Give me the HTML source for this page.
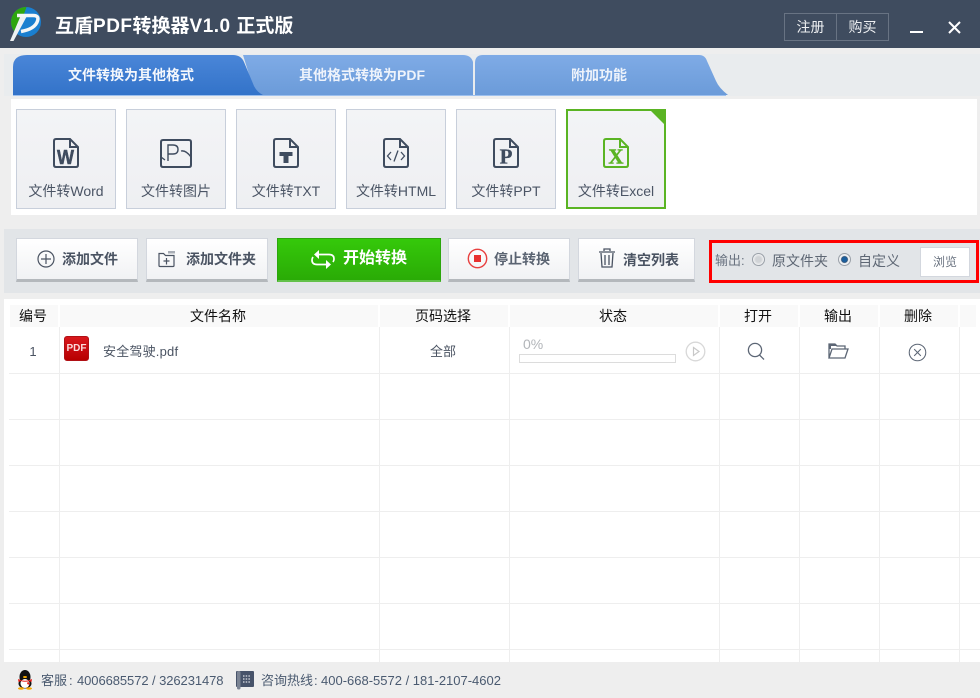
<!DOCTYPE html>
<html lang="zh"><head><meta charset="utf-8"><title>互盾PDF转换器</title>
<style>
*{box-sizing:border-box}
html,body{margin:0;padding:0}
body{width:980px;height:698px;position:relative;overflow:hidden;background:#eee;font-family:"Liberation Sans","Noto Sans CJK SC",sans-serif;color:#3f4c5f}
.a{position:absolute}
.t{position:absolute;white-space:nowrap;line-height:1}
.c{text-align:center}
.card{position:absolute;top:109px;width:100px;height:100px;border:1px solid #c8cfdb;background:linear-gradient(#f3f4f6,#eeeff2)}
.card .l{position:absolute;left:0;right:0;top:73px;text-align:center;font-size:14px;line-height:16px;color:#4b5565;white-space:nowrap}
.card svg{position:absolute;left:36px;top:28px}
.btn{position:absolute;top:238px;height:44px;border:1px solid #d3d7de;border-bottom:3px solid #b4b8bc;background:linear-gradient(#fff,#f1f2f4)}
.btn span{position:absolute;white-space:nowrap;font-size:14px;font-weight:bold;line-height:16px;top:12px;color:#4a5362}
.h{position:absolute;top:305px;height:22px;background:#f9f9f9;font-size:14px;line-height:22px;text-align:center;color:#111}
.h b{font-weight:normal;position:relative;left:-1px}
.v{position:absolute;top:327px;height:335px;width:1px;background:#eeeeee}
.r{position:absolute;left:9px;width:971px;height:1px;background:#eeeeee}
</style></head><body>
<div class="a" style="left:0;top:0;width:980px;height:48px;background:#3f4c5f"></div>
<svg class="a" style="left:0;top:0" width="48" height="48" viewBox="0 0 48 48">
<defs><clipPath id="cc"><circle cx="26" cy="22" r="15"/></clipPath></defs>
<circle cx="26" cy="22" r="15" fill="#1a7fd0"/>
<path d="M5 0H29L24 14L14 40H5Z" fill="#2ea50e" clip-path="url(#cc)"/>
<path d="M10 41L13.5 41L27.5 15L21 15Z" fill="#eef1f3"/>
<path d="M17 15.5H32Q39.500 15 37.500 21Q35 29 21 31.500" fill="none" stroke="#f4f6f7" stroke-width="3.5"/>
</svg>
<div class="t" style="left:55px;top:16px;font-size:19px;font-weight:bold;color:#fff;line-height:21px">互盾<span style="letter-spacing:.5px">PDF</span>转换器<span style="letter-spacing:.5px">V1.0 </span>正式版</div>
<div class="a" style="left:784px;top:13px;width:105px;height:28px;border:1px solid #687383"></div>
<div class="a" style="left:836px;top:13px;width:1px;height:28px;background:#687383"></div>
<div class="t c" style="left:785px;top:20px;width:51px;font-size:14px;color:#eef0f2">注册</div>
<div class="t c" style="left:837px;top:20px;width:51px;font-size:14px;color:#eef0f2">购买</div>
<div class="a" style="left:910px;top:31px;width:13px;height:2px;background:#fff"></div>
<svg class="a" style="left:948px;top:21px" width="13" height="13" viewBox="0 0 13 13"><path d="M1 1L12 12M12 1L1 12" stroke="#fff" stroke-width="2"/></svg>

<div class="a" style="left:0;top:48px;width:980px;height:6px;background:#eeeeee"></div>
<div class="a" style="left:4px;top:54px;width:976px;height:45px;background:#e9ecee"></div>
<svg class="a" style="left:0;top:54px" width="740" height="42" viewBox="0 0 740 42">
<defs>
<linearGradient id="g1" x1="0" y1="0" x2="0" y2="1"><stop offset="0" stop-color="#4a86d8"/><stop offset="1" stop-color="#3373c9"/></linearGradient>
<linearGradient id="g2" x1="0" y1="0" x2="0" y2="1"><stop offset="0" stop-color="#7fabe6"/><stop offset="1" stop-color="#6b9bd9"/></linearGradient>
</defs>
<path d="M475 41V9Q475 1 483 1H699Q705 1 707 7L716 27Q719 34 728 41Z" fill="url(#g2)"/>
<path d="M243 1H463Q471 1 473 8V20L473 41H260Q254 38 252 30Z" fill="url(#g2)"/>
<path d="M13 41V13Q13 1 27 1H233Q241 1 244 8L254 32Q257 38 263 41Z" fill="url(#g1)"/>
</svg>
<div class="a" style="left:13px;top:95px;width:713px;height:1px;background:#9dc0ee"></div>
<div class="t c" style="left:13px;top:68px;width:236px;font-size:14px;font-weight:bold;color:#f4f7fc">文件转换为其他格式</div>
<div class="t c" style="left:250px;top:68px;width:224px;font-size:14px;font-weight:bold;color:#eef3fb">其他格式转换为PDF</div>
<div class="t c" style="left:483px;top:68px;width:232px;font-size:14px;font-weight:bold;color:#eef3fb">附加功能</div>

<div class="a" style="left:4px;top:96px;width:976px;height:123px;background:#eeeeee"></div>
<div class="a" style="left:11px;top:99px;width:966px;height:116px;background:#fff"></div>

<div class="card" style="left:16px"><svg width="26" height="30" viewBox="0 0 26 30"><path d="M3 1H17L25 9V27Q25 29 23 29H3Q1 29 1 27V3Q1 1 3 1ZM17 1V9H25" fill="none" stroke="#3f4c5f" stroke-width="2"/><text x="4" y="26" textLength="17" lengthAdjust="spacingAndGlyphs" font-family="Liberation Sans" font-weight="bold" font-size="20" fill="#3f4c5f" stroke="#3f4c5f" stroke-width=".5">W</text></svg><div class="l">文件转Word</div></div>
<div class="card" style="left:126px"><svg style="left:33px;top:29px" width="32" height="29" viewBox="0 0 32 29"><path d="M3 1H29Q31 1 31 3V26Q31 28 29 28H3Q1 28 1 26V3Q1 1 3 1Z" fill="none" stroke="#3f4c5f" stroke-width="2"/><path d="M8 22V6H13Q18 6 18 10.500Q18 15 13 15H8M21 12Q26 11 31 18M1 18L5 21" fill="none" stroke="#3f4c5f" stroke-width="1.4"/></svg><div class="l">文件转图片</div></div>
<div class="card" style="left:236px"><svg width="26" height="30" viewBox="0 0 26 30"><path d="M3 1H17L25 9V27Q25 29 23 29H3Q1 29 1 27V3Q1 1 3 1ZM17 1V9H25" fill="none" stroke="#3f4c5f" stroke-width="2"/><path d="M6.500 14H19.500V18H15.500V25H10.500V18H6.500Z" fill="#3f4c5f"/></svg><div class="l">文件转TXT</div></div>
<div class="card" style="left:346px"><svg width="26" height="30" viewBox="0 0 26 30"><path d="M3 1H17L25 9V27Q25 29 23 29H3Q1 29 1 27V3Q1 1 3 1ZM17 1V9H25" fill="none" stroke="#3f4c5f" stroke-width="2"/><path d="M8 14L4.500 18L8 22M18 14L21.500 18L18 22M15 12.500L11 23.500" fill="none" stroke="#3f4c5f" stroke-width="1.3"/></svg><div class="l">文件转HTML</div></div>
<div class="card" style="left:456px"><svg width="26" height="30" viewBox="0 0 26 30"><path d="M3 1H17L25 9V27Q25 29 23 29H3Q1 29 1 27V3Q1 1 3 1ZM17 1V9H25" fill="none" stroke="#3f4c5f" stroke-width="2"/><text x="13" y="25.500" text-anchor="middle" font-family="Liberation Serif" font-weight="bold" font-size="21" fill="#3f4c5f" stroke="#3f4c5f" stroke-width=".3">P</text></svg><div class="l">文件转PPT</div></div>
<div class="card" style="left:566px;border:2px solid #5ab423"><svg style="left:35px;top:27px" width="26" height="30" viewBox="0 0 26 30"><path d="M3 1H17L25 9V27Q25 29 23 29H3Q1 29 1 27V3Q1 1 3 1ZM17 1V9H25" fill="none" stroke="#5ab423" stroke-width="2"/><text x="13" y="25.500" text-anchor="middle" font-family="Liberation Serif" font-weight="bold" font-size="21" fill="#5ab423" stroke="#5ab423" stroke-width=".5">X</text></svg><div class="l" style="top:72px">文件转Excel</div><div class="a" style="right:-2px;top:-2px;width:0;height:0;border-top:17px solid #5ab423;border-left:17px solid transparent"></div></div>

<div class="a" style="left:4px;top:229px;width:976px;height:64px;background:#e2e5e8"></div>
<div class="btn" style="left:16px;width:122px"><svg class="a" style="left:20px;top:11px" width="18" height="18" viewBox="0 0 18 18"><circle cx="9" cy="9" r="8" fill="none" stroke="#4a5362" stroke-width="1.2"/><path d="M9 4V14M4 9H14" stroke="#4a5362" stroke-width="1.2"/></svg><span style="left:45px">添加文件</span></div>
<div class="btn" style="left:146px;width:122px"><svg class="a" style="left:11px;top:12px" width="18" height="17" viewBox="0 0 18 17"><path d="M1 2.500V14.500Q1 15.500 2 15.500H15Q16 15.500 16 14.500V4.500H7.500L5.500 2.500Z" fill="none" stroke="#4a5362" stroke-width="1.2"/><path d="M8.500 7V13.500M5.500 10H11.500" stroke="#4a5362" stroke-width="1.2"/><path d="M10 0H17V2.500H10Z" fill="#a8adb5"/></svg><span style="left:39px">添加文件夹</span></div>
<div class="a" style="left:277px;top:238px;width:164px;height:44px;border:1px solid #2ba60c;border-bottom:2px solid #63c14a;background:linear-gradient(#35c90a,#2aab06)"></div>
<svg class="a" style="left:311px;top:250px" width="24" height="19" viewBox="0 0 24 19"><path d="M7 4.500H18Q23 4.500 23 9Q23 10.500 22 12M16 14.500H6Q1 14.500 1 10Q1 8.500 2 7" fill="none" stroke="#fff" stroke-width="1.7"/><path d="M8 0V9L3 4.500ZM15 10V19L20 14.500Z" fill="#fff"/></svg>
<div class="t" style="left:343px;top:250px;font-size:16px;font-weight:bold;color:#fff;line-height:18px">开始转换</div>
<div class="btn" style="left:448px;width:122px"><svg class="a" style="left:18px;top:9px" width="21" height="21" viewBox="0 0 21 21"><circle cx="10.500" cy="10.500" r="9.200" fill="none" stroke="#e8403f" stroke-width="1.400"/><rect x="7" y="7" width="7" height="7" fill="#e8302f"/></svg><span style="left:45px;color:#5b6472">停止转换</span></div>
<div class="btn" style="left:578px;width:117px"><svg class="a" style="left:20px;top:9px" width="16" height="20" viewBox="0 0 16 20"><path d="M0 4H16M5 3V1H11V3M2 5L3 19H13L14 5M6 7V17M10 7V17" fill="none" stroke="#4a5362" stroke-width="1.300"/></svg><span style="left:44px;top:13px">清空列表</span></div>

<div class="a" style="left:709px;top:240px;width:270px;height:43px;border:3px solid #f00"></div>
<div class="t" style="left:715px;top:254px;font-size:13px;color:#6a7380">输出:</div>
<div class="a" style="left:752px;top:253px;width:13px;height:13px;border-radius:50%;border:1px solid #9aa0a8;background:radial-gradient(#d0d3d6 35%,#f2f3f4 70%)"></div>
<div class="t" style="left:772px;top:254px;font-size:14px;color:#5e6774">原文件夹</div>
<div class="a" style="left:838px;top:253px;width:13px;height:13px;border-radius:50%;border:1px solid #9aa0a8;background:radial-gradient(#1a5f9e 30%,#2c4c70 38%,#eef0f2 50%)"></div>
<div class="t" style="left:858px;top:254px;font-size:14px;color:#5e6774">自定义</div>
<div class="a t c" style="left:920px;top:247px;width:50px;height:30px;border:1px solid #d3d7de;background:#fff;font-size:12px;line-height:28px;color:#6a7380">浏览</div>

<div class="a" style="left:4px;top:299px;width:976px;height:363px;background:#fff"></div>
<div class="h" style="left:10px;width:48px"><b>编号</b></div>
<div class="h" style="left:60px;width:318px"><b>文件名称</b></div>
<div class="h" style="left:380px;width:128px"><b>页码选择</b></div>
<div class="h" style="left:510px;width:208px"><b>状态</b></div>
<div class="h" style="left:720px;width:78px"><b>打开</b></div>
<div class="h" style="left:800px;width:78px"><b>输出</b></div>
<div class="h" style="left:880px;width:78px"><b>删除</b></div>
<div class="h" style="left:960px;width:16px"></div>
<div class="v" style="left:59px"></div><div class="v" style="left:379px"></div><div class="v" style="left:509px"></div><div class="v" style="left:719px"></div><div class="v" style="left:799px"></div><div class="v" style="left:879px"></div><div class="v" style="left:959px"></div>
<div class="r" style="top:373px"></div><div class="r" style="top:419px"></div><div class="r" style="top:465px"></div><div class="r" style="top:511px"></div><div class="r" style="top:557px"></div><div class="r" style="top:603px"></div><div class="r" style="top:649px"></div>

<div class="t c" style="left:9px;top:345px;width:48px;font-size:13px;color:#4a5362">1</div>
<div class="a" style="left:64px;top:336px;width:25px;height:25px;border-radius:3px;border:1px solid #b01015;background:linear-gradient(#d9181c,#c40a0e 60%,#b80000)"></div>
<div class="t c" style="left:64px;top:344px;width:25px;font-size:10px;font-weight:bold;color:#fbdcdc;font-family:'Liberation Sans',sans-serif">PDF</div>
<div class="t" style="left:103px;top:345px;font-size:13px;color:#4a5362;letter-spacing:.2px">安全驾驶.pdf</div>
<div class="t c" style="left:379px;top:345px;width:128px;font-size:13px;color:#4a5362">全部</div>
<div class="t" style="left:523px;top:337px;font-size:14px;color:#b2b5b9">0%</div>
<div class="a" style="left:519px;top:354px;width:157px;height:9px;border:1px solid #dcdcdc;background:#fff"></div>
<svg class="a" style="left:685px;top:341px" width="21" height="21" viewBox="0 0 21 21"><circle cx="10.500" cy="10.500" r="9.300" fill="none" stroke="#d8d8d8" stroke-width="1.300"/><path d="M8.500 6.500L14 10.500L8.500 14.500Z" fill="none" stroke="#c8c8c8" stroke-width="1.200"/></svg>
<svg class="a" style="left:747px;top:342px" width="18" height="18" viewBox="0 0 18 18"><circle cx="8" cy="8" r="6.600" fill="none" stroke="#5c6675" stroke-width="1.300"/><path d="M12.500 13L17 17.500" stroke="#5c6675" stroke-width="1.300"/></svg>
<svg class="a" style="left:827px;top:342px" width="22" height="18" viewBox="0 0 22 18"><path d="M2 16V2H8L10 4H18V7M2 16H18L21 7H5Z" fill="none" stroke="#5c6675" stroke-width="1.300"/><path d="M2 2H8L10 4H4V7H2Z" fill="#5c6675"/></svg>
<svg class="a" style="left:908px;top:343px" width="19" height="19" viewBox="0 0 20 20"><circle cx="10" cy="10" r="8.700" fill="none" stroke="#5c6675" stroke-width="1.100"/><path d="M6.500 6.500L13.500 13.500M13.500 6.500L6.500 13.500" stroke="#5c6675" stroke-width="1.100"/></svg>

<div class="a" style="left:0;top:662px;width:980px;height:36px;background:#eeeeee"></div>
<svg class="a" style="left:16px;top:670px" width="18" height="20" viewBox="0 0 18 20"><ellipse cx="9" cy="7" rx="5.500" ry="7" fill="#111"/><ellipse cx="9" cy="13.500" rx="6.500" ry="5" fill="#111"/><ellipse cx="9" cy="13.500" rx="4.500" ry="4.500" fill="#fff"/><path d="M2 9Q9 12.500 16 9L15.500 12L13 11Q9 12.500 5 11L2.500 12Z" fill="#e8201a"/><path d="M12 11L14 15L11 14Z" fill="#e8201a"/><ellipse cx="5" cy="18.500" rx="3" ry="1.300" fill="#f5a800"/><ellipse cx="13" cy="18.500" rx="3" ry="1.300" fill="#f5a800"/><ellipse cx="9" cy="7" rx="2" ry="1" fill="#f5a800"/></svg>
<div class="t" style="left:41px;top:674px;font-size:13px;color:#4a5a70">客服</div>
<div class="t" style="left:69px;top:674px;font-size:13px;color:#4a5a70">:</div>
<div class="t" style="left:77px;top:674px;font-size:13px;color:#4a5a70;letter-spacing:-.08px">4006685572 / 326231478</div>
<svg class="a" style="left:236px;top:671px" width="18" height="19" viewBox="0 0 18 19"><rect x="0" y="0" width="18" height="16" rx="1" fill="#47536a"/><rect x="1" y="0" width="3.500" height="18.500" rx="1.500" fill="#7b8494"/><path d="M7 5h7M7 8h7M7 11h7" stroke="#c5cad2" stroke-width="1.400" stroke-dasharray="1.500 1.200"/></svg>
<div class="t" style="left:261px;top:674px;font-size:13px;color:#4a5a70">咨询热线</div>
<div class="t" style="left:314px;top:674px;font-size:13px;color:#4a5a70">:</div>
<div class="t" style="left:321px;top:674px;font-size:13px;color:#4a5a70">400-668-5572 / 181-2107-4602</div>
</body></html>
